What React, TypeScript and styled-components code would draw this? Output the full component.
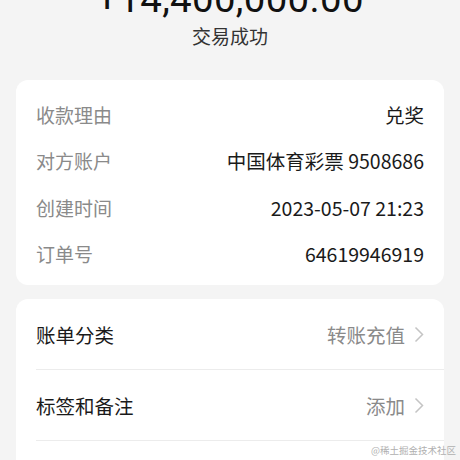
import styled, { createGlobalStyle } from "styled-components";

const GlobalStyle = createGlobalStyle`
  html, body {
    margin: 0;
    padding: 0;
    background: #f4f4f4;
    overflow: hidden;
  }
  body {
    font-family: "Noto Sans", "Noto Sans CJK SC", sans-serif;
  }
`;

const Page = styled.div`
  width: 460px;
  height: 460px;
  position: relative;
  overflow: hidden;
  background: #f4f4f4;
  display: flex;
  flex-direction: column;
  align-items: center;
`;

const Amount = styled.div`
  margin-top: -21px;
  height: 40px;
  line-height: 40px;
  font-family: Roboto, "Noto Sans CJK SC", sans-serif;
  font-size: 38.5px;
  color: #111;
  letter-spacing: 0.3px;
`;

const Status = styled.div`
  margin-top: 5px;
  font-size: 19px;
  line-height: 24px;
  color: #333;
  font-family: "Noto Sans CJK SC", sans-serif;
`;

const Card = styled.div<{ $top: number }>`
  box-sizing: border-box;
  width: 428px;
  margin-top: ${(p) => p.$top}px;
  background: #fff;
  border-radius: 12px;
  display: flex;
  flex-direction: column;
`;

const InfoList = styled(Card)`
  padding: 11px 20px 8px;
`;

const InfoRow = styled.div`
  height: 46.5px;
  display: flex;
  align-items: center;
  justify-content: space-between;
  font-family: "Noto Sans CJK SC", sans-serif;
  font-size: 19px;
`;

const Label = styled.span<{ $dark?: boolean }>`
  color: ${(p) => (p.$dark ? "#1a1a1a" : "#8a8a8a")};
`;

const Value = styled.span`
  color: #1a1a1a;
  font-size: 19.5px;
`;

const ActionRow = styled.div`
  height: 70px;
  margin-left: 20px;
  padding-right: 20px;
  display: flex;
  align-items: center;
  justify-content: space-between;
  font-family: "Noto Sans CJK SC", sans-serif;
  font-size: 19.5px;
  border-bottom: 1px solid #ececec;
`;

const ActionValue = styled.span`
  display: flex;
  align-items: center;
  gap: 9px;
  color: #8a8a8a;
`;

const Watermark = styled.div`
  position: absolute;
  right: 4px;
  bottom: 3px;
  font-family: "Noto Sans CJK SC", sans-serif;
  font-size: 9.5px;
  color: #b0b0b0;
`;

const Chevron = () => (
  <svg width="10" height="17" viewBox="0 0 10 17" fill="none">
    <path d="M1.5 1.5 L8.5 8.5 L1.5 15.5" stroke="#c4c4c4" strokeWidth="1.5" />
  </svg>
);

const info = [
  ["收款理由", "兑奖"],
  ["对方账户", "中国体育彩票 9508686"],
  ["创建时间", "2023-05-07 21:23"],
  ["订单号", "64619946919"],
];

const actions = [
  ["账单分类", "转账充值"],
  ["标签和备注", "添加"],
  ["", ""],
];

export default function App() {
  return (
    <>
      <GlobalStyle />
      <Page>
        <Amount>+14,400,000.00</Amount>
        <Status>交易成功</Status>
        <InfoList $top={32}>
          {info.map(([k, v]) => (
            <InfoRow key={k}>
              <Label>{k}</Label>
              <Value>{v}</Value>
            </InfoRow>
          ))}
        </InfoList>
        <Card $top={14}>
          {actions.map(([k, v], i) => (
            <ActionRow key={i}>
              <Label $dark>{k}</Label>
              {v && (
                <ActionValue>
                  {v}
                  <Chevron />
                </ActionValue>
              )}
            </ActionRow>
          ))}
        </Card>
        <Watermark>@稀土掘金技术社区</Watermark>
      </Page>
    </>
  );
}
